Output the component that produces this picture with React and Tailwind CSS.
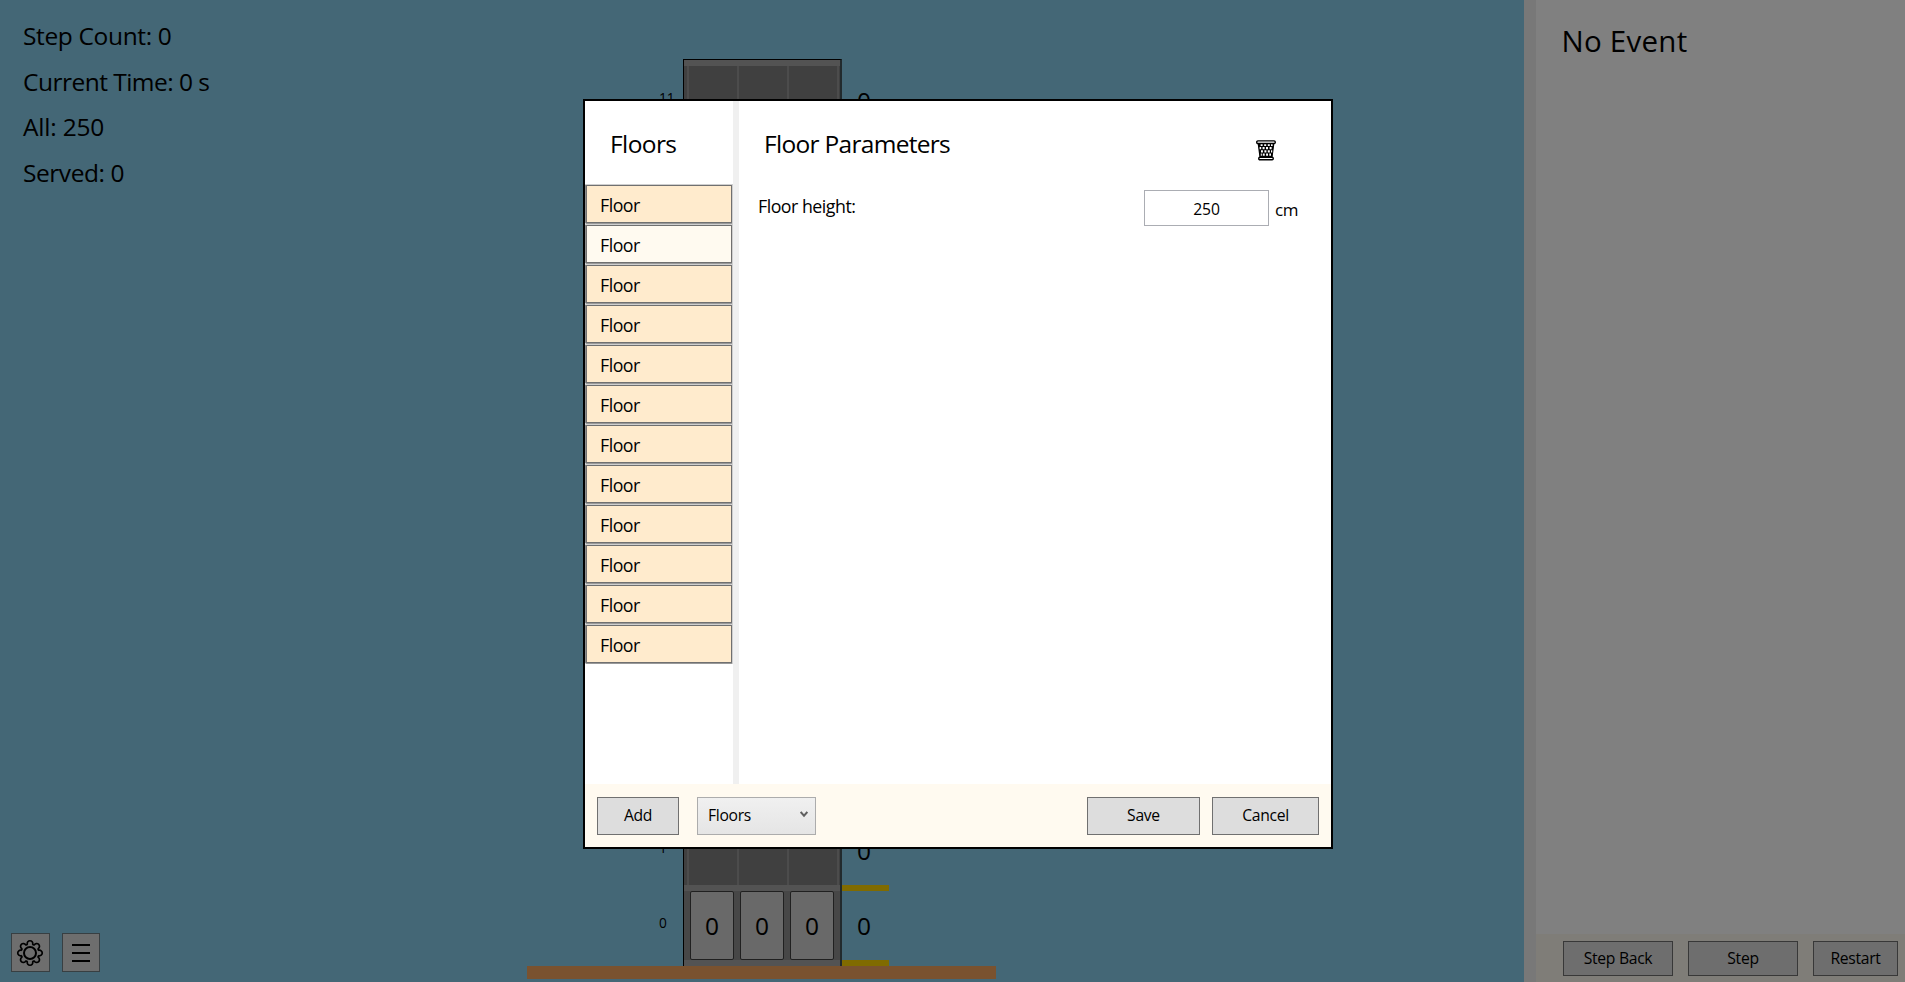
import React from "react";

const FONT = "font-['Open_Sans','Noto_Sans',sans-serif]";

function Stat({ children, className }) {
  return <div className={`h-[45.6px] leading-[45.6px] text-[24.5px] whitespace-nowrap ${className}`}>{children}</div>;
}

function DarkButton({ children, className }) {
  return (
    <button className={`flex h-[35px] items-center justify-center border border-[#383838] bg-[#6e6e6e] text-[15.7px] tracking-[-0.3px] ${className}`}>
      {children}
    </button>
  );
}

function DialogButton({ children, className }) {
  return (
    <button className={`flex h-[38px] items-center justify-center border border-[#707070] bg-[#dddddd] text-[15.7px] tracking-[-0.3px] ${className}`}>
      {children}
    </button>
  );
}

function Gear() {
  const n = 8;
  let d = "";
  for (let i = 0; i < n; i++) {
    const a = (i * Math.PI * 2) / n - Math.PI / 2;
    const p = (r, o) => `${(14 + r * Math.cos(a + o)).toFixed(2)} ${(14 + r * Math.sin(a + o)).toFixed(2)}`;
    d += `${i ? "L" : "M"}${p(9.2, -0.3)} A2.8 2.8 0 1 1 ${p(9.2, 0.3)} Q${p(8.4, 0.39)} ${p(9.2, 0.485)} `;
  }
  return (
    <svg width="28" height="28" viewBox="0 0 28 28" fill="none" stroke="#000" strokeWidth="1.7" strokeLinejoin="round" className="-ml-[1px] shrink-0">
      <path d={d + "Z"} />
      <circle cx="14" cy="14" r="6" strokeWidth="2" />
    </svg>
  );
}

function Trash() {
  return (
    <svg width="20" height="21" viewBox="0 0 20 21" fill="none" stroke="#000">
      <path d="M2.3 4 L4 17 H16 L17.7 4 Z" fill="#000" strokeWidth="1.2" />
      <g fill="#fff" stroke="none">
        <path d="M4.6 4h2v2h-2z M8.2 4h2v2h-2z M11.8 4h2v2h-2z M15 4h1.6v2h-1.6z" />
        <path d="M3.6 7h1.6v2.3h-1.6z M6.6 7h2v2.3h-2z M10 7h2v2.3h-2z M13.6 7h2v2.3h-2z" />
        <path d="M5 10.3h1.9v2.3h-1.9z M8.4 10.3h2v2.3h-2z M11.8 10.3h2v2.3h-2z M15 10.3h1.2v2.3h-1.2z" />
        <path d="M4.8 13.6h1v2.2h-1z M6.8 13.6h1.9v2.2h-1.9z M10.1 13.6h1.9v2.2h-1.9z M13.3 13.6h1.7v2.2h-1.7z" />
      </g>
      <rect x="0.75" y="0.9" width="18.5" height="2.6" rx="1.1" fill="#fff" strokeWidth="1.4" />
      <rect x="2.75" y="17.3" width="14.5" height="2.5" rx="1.1" fill="#fff" strokeWidth="1.4" />
    </svg>
  );
}

function BuildingFloor({ level }) {
  const ground = level === 0;
  return (
    <div className="flex h-[75px]">
      <div className="-ml-[1px] w-[24px] pt-[22px] text-[13.7px] leading-[20px]">{level}</div>
      <div className="flex w-[159px] flex-col border-l border-r-2 border-l-black border-r-[#222a2d] bg-[#404040]">
        {ground ? (
          <div className="flex h-[69px] gap-[6px] bg-[#474747] pl-[6px]">
            {[0, 1, 2].map((i) => (
              <div key={i} className="flex w-[44px] items-center justify-center rounded-[2px] border border-[#202020] bg-[#696969] pt-[1px] text-[24.5px] leading-none">0</div>
            ))}
          </div>
        ) : (
          <div className="flex h-[69px] gap-[48px] pl-[2.5px]">
            {[0, 1, 2, 3].map((i) => (
              <div key={i} className="w-[2px] bg-[#4c4c4c]" />
            ))}
          </div>
        )}
        <div className="h-[6px] bg-[#535353]" />
      </div>
      <div className="flex w-[47px] flex-col">
        <div className="flex h-[69px] items-center pl-[15px] pt-[1px] text-[24.5px] leading-none">0</div>
        <div className="h-[6px] bg-[#806b00]" />
      </div>
    </div>
  );
}

export default function App() {
  const levels = Array.from({ length: 12 }, (_, i) => 11 - i);
  return (
    <div className={`relative flex h-[982px] w-[1905px] overflow-hidden bg-[#446776] text-black ${FONT}`}>
      <aside className="flex w-[527px] flex-col justify-between pb-[10px] pl-[23px] pt-[13px]">
        <div>
          <Stat className="tracking-[-0.35px]">Step Count: 0</Stat>
          <Stat className="tracking-[-0.52px]">Current Time: 0 s</Stat>
          <Stat className="tracking-[-0.2px]">All: 250</Stat>
          <Stat className="tracking-[-0.45px]">Served: 0</Stat>
        </div>
        <div className="-ml-[12px] flex gap-[12px]">
          <button className="flex h-[39px] w-[39px] items-center justify-center border border-[#383f42] bg-[#6e6e6e]"><Gear /></button>
          <button className="flex h-[39px] w-[38px] flex-col items-center justify-center gap-[6px] border border-[#383f42] bg-[#6e6e6e]">
            <span className="h-[2px] w-[18px] bg-black" />
            <span className="h-[2px] w-[18px] bg-black" />
            <span className="h-[2px] w-[18px] bg-black" />
          </button>
        </div>
      </aside>

      <main className="flex w-[997px] flex-col pt-[59px]">
        <div className="ml-[156px] h-[7px] w-[159px] border border-r-2 border-b-0 border-black border-r-[#222a2d] bg-[#535353]" />
        <div className="ml-[133px]">
          {levels.map((l) => <BuildingFloor key={l} level={l} />)}
        </div>
        <div className="h-[13px] w-[469px] bg-[#7a522f]" />
      </main>

      <div className="w-[12px] bg-[#787878]" />
      <section className="flex w-[369px] flex-col justify-between bg-[#808080]">
        <h1 className="pl-[25.5px] pt-[21px] text-[29.5px] leading-[40px] tracking-[0.25px]">No Event</h1>
        <div className="flex h-[48px] items-center gap-[15px] bg-[#7f7d78] pl-[27px] pt-[1px]">
          <DarkButton className="w-[110px] shrink-0">Step Back</DarkButton>
          <DarkButton className="w-[110px] shrink-0">Step</DarkButton>
          <DarkButton className="w-[85px] shrink-0">Restart</DarkButton>
        </div>
      </section>

      <div role="dialog" className="absolute left-[583px] top-[99px] flex h-[750px] w-[750px] flex-col border-2 border-black bg-white">
        <div className="flex h-[683px]">
          <div className="w-[148px]">
            <h2 className="h-[84px] pl-[25px] pt-[23px] text-[24.5px] leading-[40px] tracking-[-0.6px]">Floors</h2>
            <div className="flex flex-col gap-[2px] pl-[1px]">
              {levels.map((l) => (
                <div key={l} className={`h-[38px] w-[146px] border border-[#707070] pl-[13px] text-[17.8px] leading-[38px] tracking-[-0.5px] shadow-[-1px_0_0_0_#8c8c8c,0_1px_0_0_#999999,0_0_0_1px_#cfcfcf] ${l === 10 ? "bg-[#fffaf0]" : "bg-[#ffebcd]"}`}>Floor</div>
              ))}
            </div>
          </div>
          <div className="w-[6px] bg-[#f0f0f0]" />
          <div className="flex-1">
            <div className="flex h-[89px] justify-between pl-[25px] pr-[55px]">
              <h2 className="pt-[23px] text-[24.5px] leading-[40px] tracking-[-0.7px]">Floor Parameters</h2>
              <div className="pt-[39px]"><Trash /></div>
            </div>
            <div className="flex">
              <div className="w-[405px] pl-[19px] text-[17.8px] leading-[32px] tracking-[-0.5px]">Floor height:</div>
              <div className="h-[36px] w-[125px] border border-[#abadb3] text-center text-[15.7px] leading-[37px] tracking-[-0.2px]">250</div>
              <div className="pl-[6px] text-[17px] leading-[40px] tracking-[-0.4px]">cm</div>
            </div>
          </div>
        </div>
        <div className="flex h-[63px] bg-[#fffaf0] pl-[12px] pt-[13px]">
          <DialogButton className="w-[82px]">Add</DialogButton>
          <div className="ml-[18px] flex h-[38px] w-[119px] items-center justify-between border border-[#acacac] bg-linear-to-b from-[#f0f0f0] to-[#e5e5e5] pl-[10px] pr-[7px] text-[15.7px] tracking-[-0.3px]">
            Floors
            <svg width="8" height="7" viewBox="0 0 8 7" className="-mt-[3px]" fill="none" stroke="#606060" strokeWidth="1.9"><path d="M0.7 1 L4 4.7 L7.3 1" /></svg>
          </div>
          <DialogButton className="ml-[271px] w-[113px]">Save</DialogButton>
          <DialogButton className="ml-[12px] w-[107px]">Cancel</DialogButton>
        </div>
      </div>
    </div>
  );
}
